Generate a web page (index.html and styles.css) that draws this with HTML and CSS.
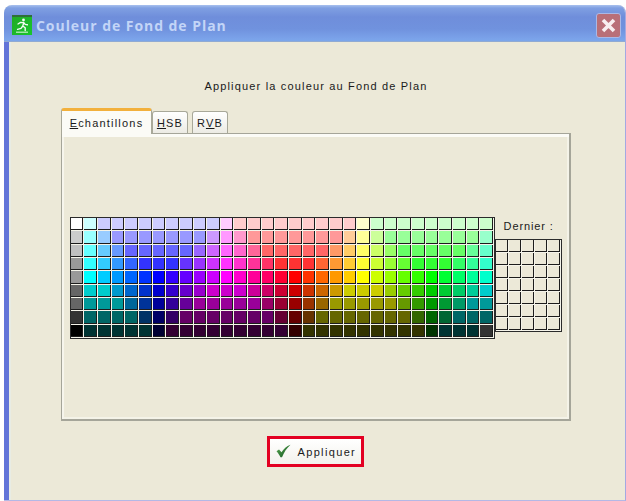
FILE: index.html
```html
<!DOCTYPE html>
<html lang="fr">
<head>
<meta charset="utf-8">
<title>Couleur de Fond de Plan</title>
<link rel="stylesheet" href="styles.css">
</head>
<body>
<div class="window">
  <header class="titlebar">
    <svg class="app-icon" viewBox="0 0 20 20" aria-hidden="true">
      <defs><linearGradient id="grn" x1="0" y1="0" x2="1" y2="1"><stop offset="0" stop-color="#22a826"/><stop offset="1" stop-color="#17c62c"/></linearGradient></defs>
      <rect width="20" height="20" fill="url(#grn)"/>
      <rect width="20" height="2" fill="#2f6f3a"/>
      <rect x="4" y="16.5" width="12" height="1.5" fill="#9fe6a6"/>
      <circle cx="11.5" cy="5" r="1.4" fill="#f2fbf2"/>
      <path d="M6 9 L8.6 7.4 L11.8 7.6 L10.8 11 L13.2 12.8 L13.2 15.6 M10.8 11 L9 13.4 L5.6 14.4 M11.8 7.6 L13.2 9.4 L15.4 9.8" fill="none" stroke="#f2fbf2" stroke-width="1.4" stroke-linecap="round" stroke-linejoin="round"/>
    </svg>
    <span class="title">Couleur de Fond de Plan</span>
    <div class="close" aria-label="Fermer">
      <svg viewBox="0 0 25 25" aria-hidden="true"><path d="M7 7 L18 18 M18 7 L7 18" stroke="#f8eef0" stroke-width="3.6" fill="none"/></svg>
    </div>
  </header>
  <main class="content">
    <p class="heading">Appliquer la couleur au Fond de Plan</p>
    <div class="tabs">
      <div class="tab tab-active"><span><u>E</u>chantillons</span></div>
      <div class="tab tab-hsb"><span><u>H</u>SB</span></div>
      <div class="tab tab-rvb"><span>R<u>V</u>B</span></div>
    </div>
    <section class="panel">
      <div class="chooser">
        <div class="swatches" id="swatches"></div>
        <div class="recent">
          <div class="recent-label">Dernier :</div>
          <div class="recent-grid" id="recent"></div>
        </div>
      </div>
    </section>
    <div class="actions">
      <button class="apply" type="button">
        <svg class="check" viewBox="0 0 18 16" preserveAspectRatio="none" aria-hidden="true">
          <defs><linearGradient id="chk" x1="0" y1="0" x2="1" y2="1"><stop offset="0" stop-color="#5fae55"/><stop offset="1" stop-color="#0c4f1c"/></linearGradient></defs>
          <path d="M0.6 8.2 L3.6 6.2 L6.6 9.4 C9 5.6 12.6 2.6 17.4 0.8 C13 4.6 9.6 9.4 7.2 15 L5.4 15 C4 12.4 2.4 10 0.6 8.2 Z" fill="url(#chk)"/>
        </svg>
        <span>Appliquer</span>
      </button>
    </div>
  </main>
</div>
<script src="swatches.js"></script>
</body>
</html>
```

FILE: styles.css
```css
* { box-sizing: border-box; }
html, body { margin: 0; padding: 0; }
body {
  width: 626px;
  height: 501px;
  background: #fff;
  overflow: hidden;
  font-family: "Liberation Sans", Arial, sans-serif;
  color: #1a1a1a;
}
.window {
  width: 622px;
  height: 496px;
  margin: 5px 0 0 4px;
  display: flex;
  flex-direction: column;
  background: #ece9d8;
  border-radius: 8px 8px 0 0;
  border-right: 1px solid #a3a9e2;
  border-bottom: 1px solid #b4b8e6;
  overflow: hidden;
}
.titlebar {
  height: 37px;
  flex: none;
  display: flex;
  align-items: center;
  padding: 3px 4px 0 8px;
  background: linear-gradient(#a9c1ee 0, #7f9fe2 3px, #6f8edb 12px, #7092de 24px, #7ba3ea 34px, #7ba6ea 36px, #a4aebc 37px);
}
.app-icon { width: 20px; height: 20px; flex: none; }
.title {
  margin-left: 4px;
  padding-top: 1px;
  font-size: 14px;
  font-weight: bold;
  letter-spacing: 0.95px;
  color: #c3d5f7;
  font-family: "Open Sans", sans-serif;
}
.close {
  margin-left: auto;
  width: 25px;
  height: 25px;
  border: 1px solid #aab8e6;
  border-radius: 3px;
  background: #b96f78;
}
.close svg { display: block; margin: -1px; width: 25px; height: 25px; }
.content {
  flex: 1;
  display: flex;
  flex-direction: column;
  border-left: 5px solid #6274d8;
  box-shadow: inset 2px 0 0 #e8ece4;
  padding-left: 52px;
}
.heading {
  margin: 37px 0 0 0;
  height: 14px;
  width: 510px;
  text-align: center;
  font-size: 11px;
  line-height: 14px;
  letter-spacing: 1.17px;
}
.tabs {
  display: flex;
  align-items: flex-end;
  height: 25px;
  margin-top: 15px;
}
.tab {
  display: flex;
  align-items: center;
  justify-content: center;
  font-size: 11px;
  letter-spacing: 1.2px;
  border: 1px solid #a8a899;
  border-bottom: 0;
  border-radius: 3px 3px 0 0;
  background: linear-gradient(#fff, #ecebe4);
}
.tab-active {
  width: 91px;
  height: 26px;
  margin-bottom: -1px;
  background: #fbfbf6;
  border-top: 3px solid #f2b03c;
  position: relative;
}
.tab-hsb { width: 36px; height: 22px; }
.tab-rvb { width: 36px; height: 22px; margin-left: 4px; }
.panel {
  width: 510px;
  height: 288px;
  display: flex;
  align-items: center;
  justify-content: center;
  background: #ece9d8;
  border: 1px solid #a5a599;
  border-right: 2px solid #a5a599;
  border-bottom: 2px solid #a5a599;
  box-shadow: inset 0 3px 0 #fbfbf6, inset 2px 0 0 #f6f5ec, inset -2px -2px 0 #f4f3e8;
  padding: 3px 0 0 1px;
}
.chooser { display: flex; align-items: flex-start; }
.swatches, .recent-grid {
  display: grid;
  border: 1px solid #2b2b2b;
}
.swatches {
  grid-template-columns: repeat(31, 13.67px);
  grid-auto-rows: 13.4px;
}
.recent-grid {
  grid-template-columns: repeat(5, 13.1px);
  grid-auto-rows: 13.1px;
}
.cell {
  background: #ece9d8;
  border-right: 1px solid #f5f4ea;
  border-bottom: 1px solid #f5f4ea;
  box-shadow: inset -1px -1px 0 #1c1c1c;
}
.recent { display: flex; flex-direction: column; align-items: center; }
.recent-label {
  height: 22px;
  font-size: 11px;
  letter-spacing: 0.9px;
  line-height: 18px;
}
.actions { display: flex; justify-content: center; width: 510px; margin-top: 15px; padding-right: 2px; }
.apply {
  width: 97px;
  height: 31px;
  display: flex;
  align-items: center;
  gap: 7px;
  padding: 0 0 0 6px;
  border: 3px solid #e30022;
  border-radius: 0;
  background: linear-gradient(#fff, #f3f2ec);
  font: 11px "Liberation Sans", Arial, sans-serif;
  letter-spacing: 1.35px;
  color: #1a1a1a;
}
.check { width: 15px; height: 14px; flex: none; margin-top: -1px; }
```

FILE: swatches.js
```js
// Colour table of the swatch chooser, row by row. "c*N" repeats a colour N times.
var rows = [
  "fff cff ccf*9 fcf fcc*9 ffc cfc*9",
  "ccc 9ff 9cf 99f*7 c9f f9f f9c f99*7 fc9 ff9 cf9 9f9*7 9fc",
  "c0c0c0 6ff 6cf 69f 66f*5 96f c6f f6f f6c f69 f66*5 f96 fc6 ff6 cf6 9f6 6f6*5 6f9 6fc",
  "999 3ff 3cf 39f 36f 33f*3 63f 93f c3f f3f f3c f39 f36 f33*3 f63 f93 fc3 ff3 cf3 9f3 6f3 3f3*3 3f6 3f9 3fc",
  "999 0ff 0cf 09f 06f 03f 00f 30f 60f 90f c0f f0f f0c f09 f06 f03 f00 f30 f60 f90 fc0 ff0 cf0 9f0 6f0 3f0 0f0 0f3 0f6 0f9 0fc",
  "666 0cc*2 09c 06c 03c 00c 30c 60c 90c c0c*3 c09 c06 c03 c00 c30 c60 c90 cc0*3 9c0 6c0 3c0 0c0 0c3 0c6 0c9 0cc",
  "666 099*3 069 039 009 309 609 909*5 906 903 900 930 960 990*5 690 390 090 093 096 099*2",
  "333 066*4 036 006 306 606*7 603 600 630 660*7 360 060 063 066*3",
  "000 033*5 003 303*9 300 330*9 030 033*3 333"
];
var box = document.getElementById("swatches");
rows.forEach(function (row) {
  row.split(" ").forEach(function (tok) {
    var parts = tok.split("*");
    var n = parts[1] ? +parts[1] : 1;
    for (var i = 0; i < n; i++) {
      var d = document.createElement("div");
      d.className = "cell";
      d.style.background = "#" + parts[0];
      box.appendChild(d);
    }
  });
});
var recent = document.getElementById("recent");
for (var j = 0; j < 35; j++) {
  var r = document.createElement("div");
  r.className = "cell";
  recent.appendChild(r);
}
```
